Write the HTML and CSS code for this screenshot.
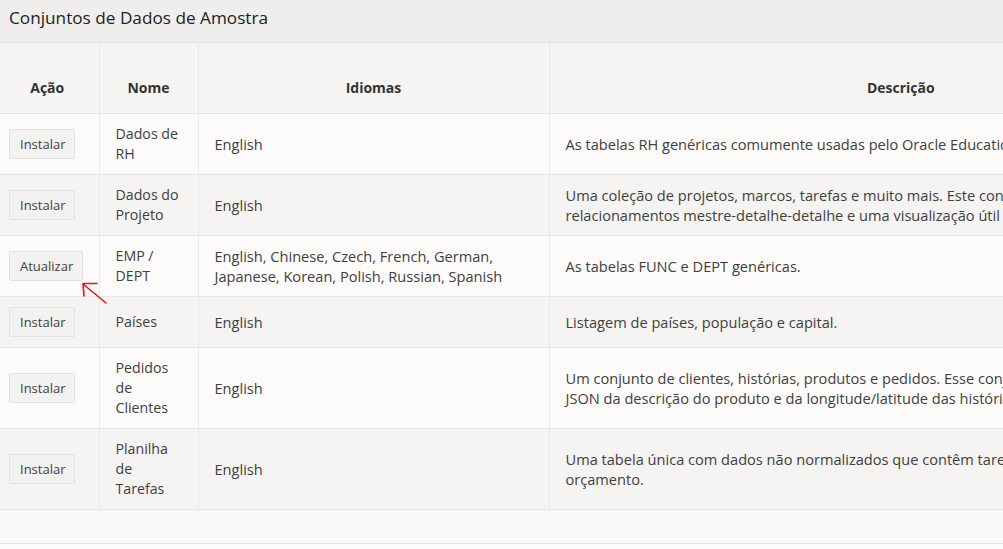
FILE: index.html
```html
<!DOCTYPE html>
<html lang="pt">
<head>
<meta charset="utf-8">
<title>Conjuntos de Dados de Amostra</title>
<link rel="stylesheet" href="styles.css">
</head>
<body>
<div class="region">
  <div class="region-header"><h2 class="region-title">Conjuntos de Dados de Amostra</h2></div>
  <div class="region-body">
    <table class="report">
      <colgroup>
        <col class="c-acao"><col class="c-nome"><col class="c-idiomas"><col class="c-desc">
      </colgroup>
      <thead>
        <tr><th class="th-act">Ação</th><th>Nome</th><th>Idiomas</th><th>Descrição</th></tr>
      </thead>
      <tbody>
        <tr>
          <td class="act"><button class="btn">Instalar</button></td>
          <td class="name">Dados de<br>RH</td>
          <td>English</td>
          <td class="desc">As tabelas RH genéricas comumente usadas pelo Oracle Education.</td>
        </tr>
        <tr>
          <td class="act"><button class="btn">Instalar</button></td>
          <td class="name">Dados do<br>Projeto</td>
          <td>English</td>
          <td class="desc">Uma coleção de projetos, marcos, tarefas e muito mais. Este conjunto<br>relacionamentos mestre-detalhe-detalhe e uma visualização útil</td>
        </tr>
        <tr>
          <td class="act"><button class="btn">Atualizar</button></td>
          <td class="name">EMP /<br>DEPT</td>
          <td>English, Chinese, Czech, French, German,<br>Japanese, Korean, Polish, Russian, Spanish</td>
          <td class="desc">As tabelas FUNC e DEPT genéricas.</td>
        </tr>
        <tr>
          <td class="act"><button class="btn">Instalar</button></td>
          <td class="name">Países</td>
          <td>English</td>
          <td class="desc">Listagem de países, população e capital.</td>
        </tr>
        <tr>
          <td class="act"><button class="btn">Instalar</button></td>
          <td class="name">Pedidos<br>de<br>Clientes</td>
          <td>English</td>
          <td class="desc">Um conjunto de clientes, histórias, produtos e pedidos. Esse conjunto<br>JSON da descrição do produto e da longitude/latitude das histórias</td>
        </tr>
        <tr>
          <td class="act"><button class="btn">Instalar</button></td>
          <td class="name">Planilha<br>de<br>Tarefas</td>
          <td>English</td>
          <td class="desc">Uma tabela única com dados não normalizados que contêm tarefas<br>orçamento.</td>
        </tr>
      </tbody>
    </table>
    <div class="report-footer"></div>
  </div>
</div>
<svg class="annot" width="40" height="40" viewBox="0 0 40 40" aria-hidden="true">
  <path d="M36 32 L13 13 M13 12.5 L27 12.5 M13 12.5 L14 25" stroke="#e8141a" stroke-width="1.6" fill="none" stroke-linecap="round"/>
</svg>
</body>
</html>
```
FILE: styles.css
```css
html, body {
  margin: 0;
  padding: 0;
}
body {
  background: #fcfcfb;
  font-family: "Open Sans", "Noto Sans", "Liberation Sans", sans-serif;
  color: #404040;
  overflow: hidden;
  width: 1003px;
  height: 549px;
  position: relative;
}
.region-header {
  background: #efeeec;
  height: 42px;
  border-bottom: 1px solid #e1e0de;
  display: flex;
  align-items: center;
  padding-left: 9px;
}
.region-title {
  margin: 0;
  font-size: 17.2px;
  font-weight: 400;
  color: #222;
  padding-bottom: 8px;
}
.region-body {
  width: 1260px;
}
.report {
  border-collapse: collapse;
  table-layout: fixed;
  width: 1252px;
  font-size: 14.6px;
  line-height: 20px;
}
.c-acao { width: 99px; }
.c-nome { width: 99px; }
.c-idiomas { width: 351px; }
.c-desc { width: 703px; }
.report th {
  height: 50px;
  background: #f6f5f3;
  font-weight: 700;
  color: #333;
  font-size: 14px;
  text-align: center;
  vertical-align: middle;
  border-bottom: 1px solid #e6e5e3;
  border-left: 1px solid #e9e8e6;
  padding: 20px 16px 0;
}
.report th.th-act { padding-left: 12px; padding-right: 16px; }
.report th:first-child { border-left: none; }
.report td {
  padding: 10px 16px;
  vertical-align: middle;
  border-bottom: 1px solid #e6e5e3;
  border-left: 1px solid #ebeae8;
  white-space: nowrap;
  overflow: hidden;
}
.report td.name { font-size: 14.2px; }
.report td:first-child { border-left: none; }
.report td.act { padding: 10px 9px; }
.report tbody tr:nth-child(odd) td { background: #fcfbfa; }
.report tbody tr:nth-child(even) td { background: #f5f4f2; }
.btn {
  font-family: inherit;
  font-size: 13px;
  color: #404040;
  background: #f3f2f0;
  border: 1px solid #e2e1df;
  border-radius: 2px;
  height: 30px;
  line-height: 16px;
  padding: 0 9px 0 10px;
  cursor: pointer;
}
.report-footer {
  height: 33px;
  background: #faf9f8;
  border-bottom: 1px solid #e6e5e3;
}
.annot {
  position: absolute;
  left: 70px;
  top: 271px;
}
```
